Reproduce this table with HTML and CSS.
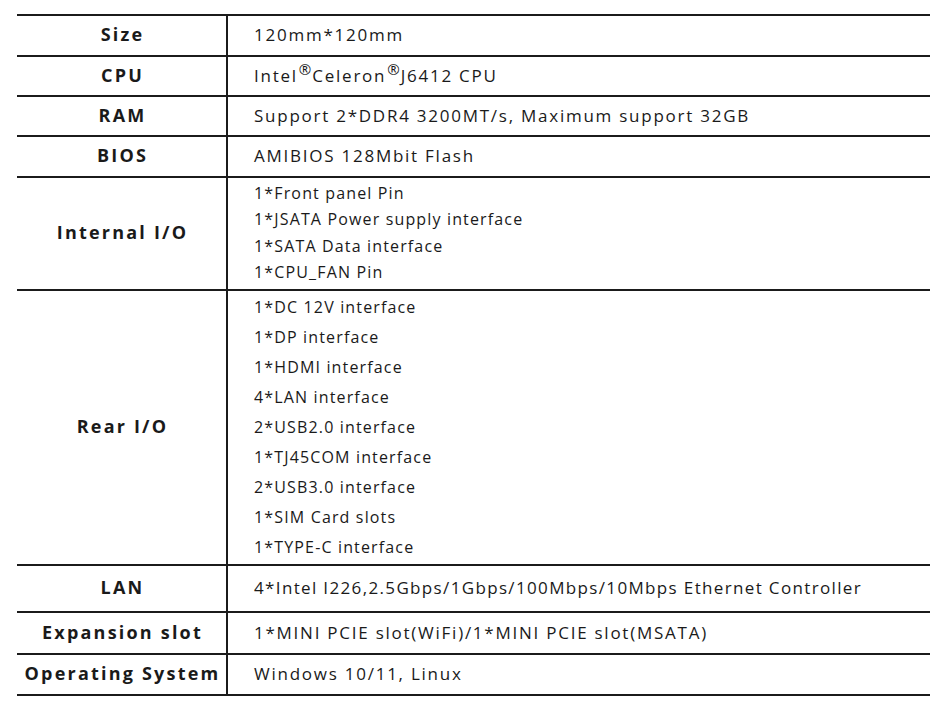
FILE: index.html
```html
<!DOCTYPE html>
<html>
<head>
<meta charset="utf-8">
<link rel="stylesheet" href="styles.css">
</head>
<body>
<div class="spec">
  <div class="row r1"><div class="label">Size</div><div class="value">120mm*120mm</div></div>
  <div class="row r2"><div class="label">CPU</div><div class="value"><span>Intel<sup>®</sup>Celeron<sup>®</sup>J6412 CPU</span></div></div>
  <div class="row r2"><div class="label">RAM</div><div class="value">Support 2*DDR4 3200MT/s, Maximum support 32GB</div></div>
  <div class="row r1"><div class="label">BIOS</div><div class="value">AMIBIOS 128Mbit Flash</div></div>
  <div class="row"><div class="label">Internal I/O</div>
    <div class="value list internal">
      <div>1*Front panel Pin</div>
      <div>1*JSATA Power supply interface</div>
      <div>1*SATA Data interface</div>
      <div>1*CPU_FAN Pin</div>
    </div>
  </div>
  <div class="row"><div class="label">Rear I/O</div>
    <div class="value list rear">
      <div>1*DC 12V interface</div>
      <div>1*DP interface</div>
      <div>1*HDMI interface</div>
      <div>4*LAN interface</div>
      <div>2*USB2.0 interface</div>
      <div>1*TJ45COM interface</div>
      <div>2*USB3.0 interface</div>
      <div>1*SIM Card slots</div>
      <div>1*TYPE-C interface</div>
    </div>
  </div>
  <div class="row r3"><div class="label">LAN</div><div class="value tight">4*Intel I226,2.5Gbps/1Gbps/100Mbps/10Mbps Ethernet Controller</div></div>
  <div class="row r4"><div class="label">Expansion slot</div><div class="value">1*MINI PCIE slot(WiFi)/1*MINI PCIE slot(MSATA)</div></div>
  <div class="row r1"><div class="label">Operating System</div><div class="value">Windows 10/11, Linux</div></div>
</div>
</body>
</html>
```
FILE: styles.css
```css
html, body {
  margin: 0;
  padding: 0;
  background: #ffffff;
}
body {
  font-family: "Open Sans", "Noto Sans", sans-serif;
  color: #1a1a1a;
}
.spec {
  margin: 14px 0 0 17px;
  width: 913px;
  border-top: 2px solid #1b1b1b;
}
.row {
  display: grid;
  grid-template-columns: 211px 1fr;
  border-bottom: 2px solid #1b1b1b;
}
.r1 { height: 39px; }
.r2 { height: 38px; }
.r3 { height: 45px; }
.r4 { height: 40px; }
.label {
  box-sizing: border-box;
  border-right: 2px solid #1b1b1b;
  display: flex;
  align-items: center;
  justify-content: center;
  font-weight: 700;
  font-size: 18px;
  letter-spacing: 2.2px;
  padding-left: 2px;
  padding-bottom: 3px;
}
.value {
  display: flex;
  align-items: center;
  padding-left: 26px;
  padding-bottom: 2px;
  font-size: 17px;
  letter-spacing: 1.75px;
}
.value.tight {
  letter-spacing: 1.35px;
}
.value sup {
  font-size: 15px;
  line-height: 0;
  vertical-align: 7px;
  letter-spacing: 0;
  margin: 0 1px 0 1px;
}
.list {
  flex-direction: column;
  align-items: flex-start;
  justify-content: flex-start;
  font-size: 16px;
  letter-spacing: 1.15px;
}
.internal {
  padding-top: 2px;
  padding-bottom: 4px;
  line-height: 26.3px;
}
.rear {
  padding-top: 1px;
  padding-bottom: 2px;
  line-height: 30px;
}
```
